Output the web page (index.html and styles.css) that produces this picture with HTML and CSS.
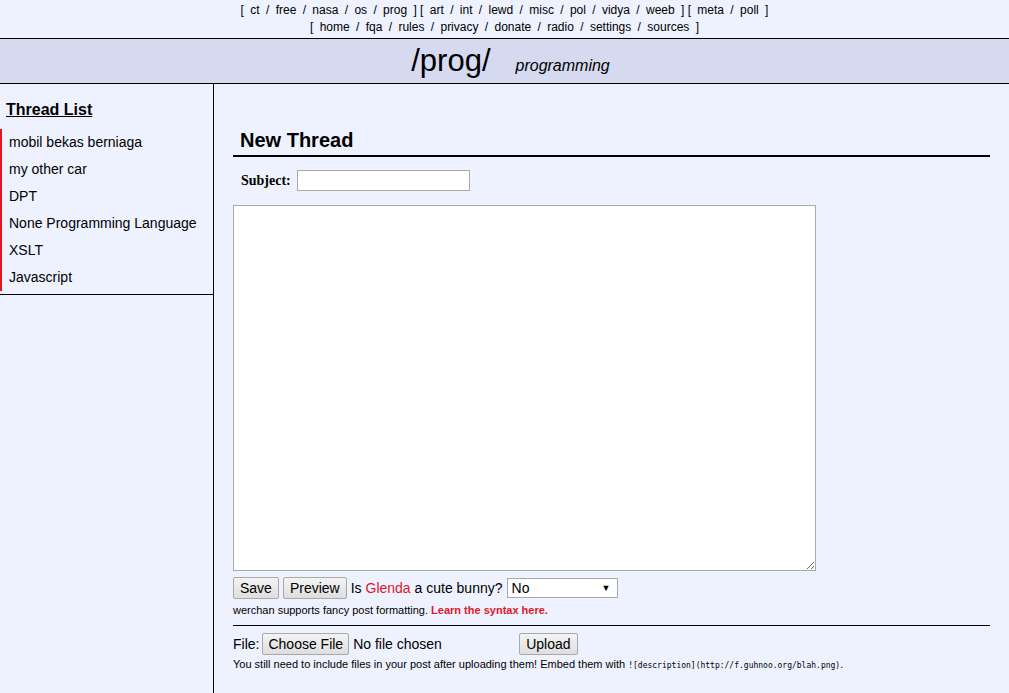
FILE: index.html
```html
<!DOCTYPE html>
<html>
<head>
<meta charset="utf-8">
<link rel="stylesheet" href="styles.css">
</head>
<body>
<nav class="topnav">
  <div class="navline">[ <a>ct</a> / <a>free</a> / <a>nasa</a> / <a>os</a> / <a>prog</a> ] [ <a>art</a> / <a>int</a> / <a>lewd</a> / <a>misc</a> / <a>pol</a> / <a>vidya</a> / <a>weeb</a> ] [ <a>meta</a> / <a>poll</a> ]</div>
  <div class="navline">[ <a>home</a> / <a>fqa</a> / <a>rules</a> / <a>privacy</a> / <a>donate</a> / <a>radio</a> / <a>settings</a> / <a>sources</a> ]</div>
</nav>
<header class="banner">
  <span class="board">/prog/</span>
  <span class="desc">programming</span>
</header>
<div class="layout">
  <aside class="sidebar">
    <div class="threadlist">
      <h2 class="tl-title">Thread List</h2>
      <ul class="tl-items">
        <li>mobil bekas berniaga</li>
        <li>my other car</li>
        <li>DPT</li>
        <li>None Programming Language</li>
        <li>XSLT</li>
        <li>Javascript</li>
      </ul>
    </div>
  </aside>
  <main class="main">
    <h1 class="nt-title">New Thread</h1>
    <div class="subject-row">
      <label class="subject-label">Subject:</label>
      <input class="subject-input" type="text">
    </div>
    <textarea class="body-input"></textarea>
    <div class="actions">
      <button class="btn">Save</button>
      <button class="btn">Preview</button>
      <span class="captcha">Is <span class="red">Glenda</span> a cute bunny?</span>
      <div class="select"><span>No</span><span class="arrow">&#9660;</span></div>
    </div>
    <p class="small">werchan supports fancy post formatting. <a class="red bold">Learn the syntax here.</a></p>
    <hr class="sep">
    <div class="file-row">
      <span>File:</span>
      <button class="btn choose">Choose File</button>
      <span class="nofile">No file chosen</span>
      <button class="btn upload">Upload</button>
    </div>
    <p class="small note">You still need to include files in your post after uploading them! Embed them with <code>![description](http://f.guhnoo.org/blah.png)</code>.</p>
  </main>
</div>
</body>
</html>
```

FILE: styles.css
```css
html, body {
  margin: 0;
  padding: 0;
  background: #eef2fe;
  font-family: "Liberation Sans", Arial, sans-serif;
  color: #000;
  height: 100%;
}
.topnav {
  text-align: center;
  font-size: 12px;
  line-height: 17px;
  padding-top: 2px;
  height: 36px;
}
.topnav a {
  padding: 0 3px;
}
.banner {
  border-top: 1px solid #000;
  border-bottom: 1px solid #000;
  background: #d6daf0;
  height: 44px;
  display: flex;
  justify-content: center;
  align-items: baseline;
  padding-left: 12px;
  box-sizing: content-box;
}
.board {
  font-size: 31px;
  line-height: 44px;
}
.desc {
  font-size: 16px;
  font-style: italic;
  margin-left: 25px;
}
.layout {
  display: flex;
  min-height: calc(100% - 84px);
}
.sidebar {
  width: 213px;
  border-right: 1px solid #000;
  flex: none;
}
.threadlist {
  border-bottom: 1px solid #000;
  padding-top: 16px;
  padding-bottom: 3px;
}
.tl-title {
  font-size: 16px;
  font-weight: bold;
  text-decoration: underline;
  margin: 0 0 9px 6px;
  line-height: 20px;
}
.tl-items {
  list-style: none;
  margin: 0;
  padding: 0;
}
.tl-items li {
  font-size: 14px;
  line-height: 27px;
  border-left: 2px solid #e8141e;
  padding-left: 7px;
}
.main {
  flex: 1;
  padding: 0 19px 0 19px;
}
.nt-title {
  font-size: 20px;
  font-weight: bold;
  margin: 44px 0 0 0;
  padding-left: 7px;
  line-height: 24px;
  border-bottom: 2px solid #000;
  padding-bottom: 3px;
}
.subject-row {
  display: flex;
  align-items: center;
  margin-top: 13px;
  padding-left: 8px;
}
.subject-label {
  font-family: "Liberation Serif", "Times New Roman", serif;
  font-weight: bold;
  font-size: 14px;
  margin-right: 6px;
}
.subject-input {
  width: 173px;
  height: 21px;
  box-sizing: border-box;
  border: 1px solid #a9a9a9;
  background: #fff;
  margin: 0;
}
.body-input {
  display: block;
  margin: 14px 0 0 0;
  width: 583px;
  height: 366px;
  box-sizing: border-box;
  border: 1px solid #a9a9a9;
  background: #fff;
  resize: both;
}
.actions {
  display: flex;
  align-items: center;
  margin-top: 6px;
  font-size: 14px;
}
.btn {
  font-family: "Liberation Sans", Arial, sans-serif;
  font-size: 14px;
  height: 22px;
  padding: 0 6px;
  border: 1px solid #a9a9a9;
  border-radius: 2px;
  background: linear-gradient(#f4f4f4, #dedede);
  color: #000;
  margin: 0 4px 0 0;
}
.red {
  color: #e0162b;
}
.bold {
  font-weight: bold;
}
.select {
  margin-left: 4px;
  width: 111px;
  height: 20px;
  box-sizing: border-box;
  border: 1px solid #a9a9a9;
  background: #fff;
  display: flex;
  justify-content: space-between;
  align-items: center;
  padding: 0 6px 0 4px;
}
.arrow {
  font-size: 9px;
}
.small {
  font-size: 11px;
  margin: 4px 0 0 0;
  line-height: 14px;
}
.sep {
  border: none;
  border-top: 1px solid #000;
  margin: 8px 0 0 0;
}
.file-row {
  display: flex;
  align-items: center;
  margin-top: 7px;
  font-size: 14px;
}
.choose {
  margin-left: 3px;
  padding: 0 5px;
}
.nofile {
  width: 166px;
}
.upload {
  margin-left: 0;
}
.note {
  margin-top: 2px;
}
code {
  font-family: "DejaVu Sans Mono", monospace;
  font-size: 8px;
}
```
